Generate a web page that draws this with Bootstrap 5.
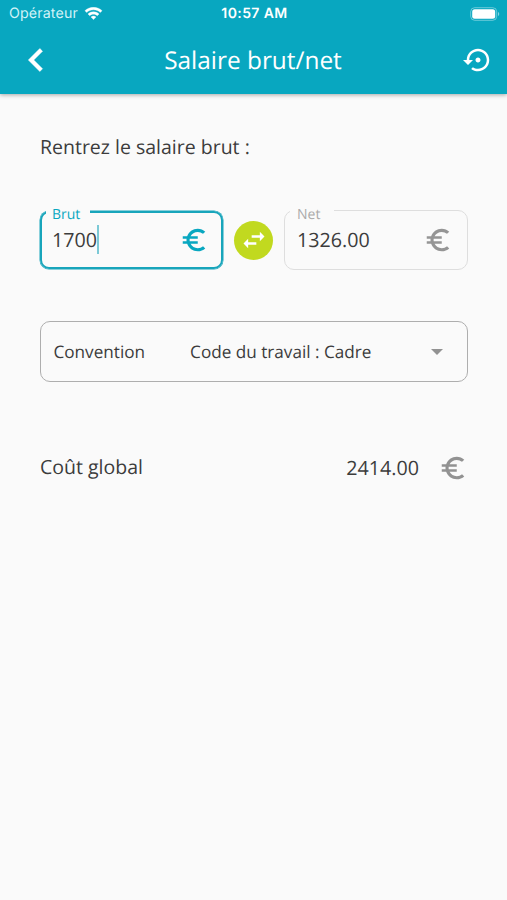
<!DOCTYPE html>
<html lang="fr">
<head>
<meta charset="utf-8">
<meta name="viewport" content="width=device-width, initial-scale=1">
<title>Salaire brut/net</title>
<link href="https://cdn.jsdelivr.net/npm/bootstrap@5.3.0/dist/css/bootstrap.min.css" rel="stylesheet">
<style>
body{background:#fafafa;color:#3c3c3c;font-family:"Open Sans","Noto Sans",sans-serif;font-size:19.5px;line-height:28px;min-height:900px;overflow:hidden;text-rendering:geometricPrecision}
svg{display:block;fill:currentColor;flex:none}
.app-head{background:#08a7c0;height:94px;box-shadow:0 1px 4px rgba(0,0,0,.34)}
.status{height:28px;font-family:Inter,sans-serif;font-size:14.2px;line-height:28px;padding:0 7px 0 9px}
.status>div,.title-row>div{flex:1 1 0}
.status .clock{flex:none;font-weight:600;font-size:14px;letter-spacing:.4px}
.carrier{color:#d3f3f8;letter-spacing:.15px;margin-right:6px}
.title-row{height:64px;padding:0 14px 0 13px}
.title-row h1{font-size:24.4px;line-height:32px;flex:none;padding-top:2px}
.page{padding:39px 39px 0 40px}
.fields{margin-top:49px;height:60px}
.field{border:0;height:59px;min-width:0;padding:0 15px 0 12px;margin:0}
.field-brut{width:183px;color:#08a7c0;padding-right:14px}
.field-net{width:184px;color:#959595;padding-left:13px}
.field .outline-box{inset:0 0 0 0;border:1px solid #dedede;border-radius:10px}
.field-net .outline-box{inset:0 0 -1px 0}
.field-brut .outline-box{inset:1px 0 0 0;border:2px solid #18a5bb;border-radius:9px;box-shadow:0 0 0 .5px #18a5bb}
.field label{left:6px;top:-5px;padding:0 0 0 6px;width:44px;font-size:14px;line-height:20px;background:#fafafa;height:18px}
.field-net label{color:#ababab;padding-left:7px}
.amount{color:#3c3c3c;font-size:19.7px}
.caret{width:2px;height:29px;background:#7cc9d6}
.swap{width:39px;height:39px;background:#c1d91f;border:0;color:#fff}
.convention{margin-top:51px;height:61px;border:1.5px solid #aeaeae;border-radius:10px;padding:0 18px 0 12.5px;font-size:17.15px}
.convention span{padding-top:2px}
.convention .choice{margin-left:45px}
.cost{margin-top:71px;height:30px}
.cost .name{padding-bottom:2px}
.cost .symbol{margin-left:19px}
.grey{color:#929292}
</style>
<script src="https://cdn.jsdelivr.net/npm/bootstrap@5.3.0/dist/js/bootstrap.bundle.min.js"></script>
</head>
<body>
<svg class="d-none"><symbol id="euro" viewBox="0 0 24 24"><path d="M15 18.5c-2.51 0-4.68-1.42-5.76-3.5H15v-2H8.58c-.05-.33-.08-.66-.08-1s.03-.67.08-1H15V9H9.24C10.32 6.92 12.5 5.5 15 5.5c1.61 0 3.09.59 4.23 1.57L21 5.3C19.41 3.87 17.3 3 15 3c-3.92 0-7.24 2.51-8.48 6H3v2h3.06c-.04.33-.06.66-.06 1 0 .34.02.67.06 1H3v2h3.52c1.24 3.49 4.56 6 8.48 6 2.31 0 4.41-.87 6-2.3l-1.78-1.77c-1.13.98-2.6 1.57-4.22 1.57z"/></symbol></svg>
<header class="app-head text-white position-relative">
  <div class="status d-flex align-items-center">
    <div class="d-flex align-items-center"><span class="carrier">Opérateur</span>
      <svg width="19" height="14" viewBox="0 0 20 14"><path d="M10 0C6.500 0 3.300 1.300 1 3.500L2.800 5.400C4.700 3.600 7.200 2.600 10 2.600s5.300 1 7.200 2.800L19 3.500C16.700 1.300 13.500 0 10 0zM10 4.700c-2.300 0-4.300.9-5.800 2.300L6 8.800c1-1 2.400-1.600 4-1.600s3 .6 4 1.600L15.800 7C14.300 5.600 12.300 4.700 10 4.700zM10 9.200c-1 0-1.900.4-2.600 1L10 12.900l2.600-2.700c-.7-.6-1.600-1-2.600-1z" stroke="#fff" stroke-width=".4"/></svg>
    </div>
    <div class="clock">10:57 AM</div>
    <div class="d-flex justify-content-end">
      <svg width="30" height="14" viewBox="0 0 30 14"><rect x=".7" y=".7" width="26" height="12.600" rx="4" fill="none" stroke="#fff" stroke-opacity=".4"/><rect x="2.200" y="2.200" width="23" height="9.600" rx="2.500"/><path d="M28 5v4c1.700-.7 1.700-3.300 0-4z" fill-opacity=".5"/></svg>
    </div>
  </div>
  <div class="title-row d-flex align-items-center">
    <div><svg width="46" height="46" viewBox="0 0 24 24"><path d="M15.410 7.410L14 6l-6 6 6 6 1.410-1.410L10.830 12z" stroke="#fff" stroke-width=".25"/></svg></div>
    <h1 class="fw-normal m-0">Salaire brut/net</h1>
    <div class="d-flex justify-content-end"><svg width="30" height="30" viewBox="0 0 24 24"><path d="M14 12c0-1.100-.9-2-2-2s-2 .9-2 2 .9 2 2 2 2-.9 2-2zm-2-9c-4.970 0-9 4.030-9 9H0l4 4 4-4H5c0-3.870 3.130-7 7-7s7 3.130 7 7-3.130 7-7 7c-1.510 0-2.910-.49-4.060-1.300l-1.420 1.440C8.040 20.300 9.940 21 12 21c4.970 0 9-4.030 9-9s-4.030-9-9-9z"/></svg></div>
  </div>
</header>
<main class="page">
  <p class="m-0">Rentrez le salaire brut :</p>
  <div class="fields d-flex align-items-start justify-content-between">
    <div class="field field-brut position-relative d-flex align-items-center justify-content-between">
      <div class="outline-box position-absolute"></div><label class="position-absolute">Brut</label>
      <div class="d-flex align-items-center"><span class="amount">1700</span><span class="caret"></span></div>
      <svg width="30" height="30"><use href="#euro"/></svg>
    </div>
    <button class="swap rounded-circle d-flex align-items-center justify-content-center p-0 align-self-center"><svg width="28" height="28" viewBox="0 0 24 24"><path d="M6.990 11L3 15l3.990 4v-3H14v-2H6.990v-3zM21 9l-3.990-4v3H10v2h7.010v3L21 9z"/></svg></button>
    <div class="field field-net position-relative d-flex align-items-center justify-content-between">
      <div class="outline-box position-absolute"></div><label class="position-absolute">Net</label>
      <span class="amount">1326.00</span>
      <svg width="30" height="30"><use href="#euro"/></svg>
    </div>
  </div>
  <div class="convention d-flex align-items-center">
    <span>Convention</span><span class="choice">Code du travail : Cadre</span>
    <svg class="ms-auto grey" width="24" height="24" viewBox="0 0 24 24"><path d="M6 9l6 6 6-6z"/></svg>
  </div>
  <div class="cost d-flex align-items-center">
    <span class="name">Coût global</span><span class="amount ms-auto">2414.00</span>
    <svg class="symbol grey" width="30" height="30"><use href="#euro"/></svg>
  </div>
</main>
</body>
</html>
